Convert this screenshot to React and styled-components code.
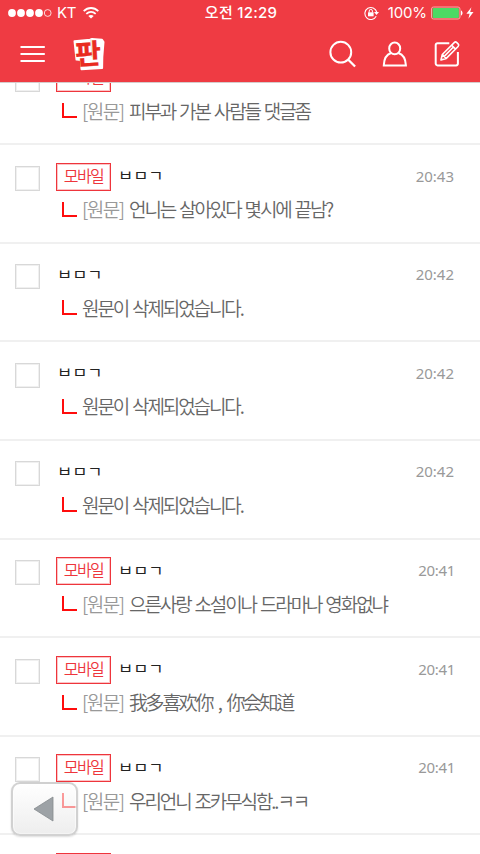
import React from "react";
import styled, { createGlobalStyle } from "styled-components";

const GlobalStyle = createGlobalStyle`
  * {
    box-sizing: border-box;
  }
  body {
    margin: 0;
    background: #fff;
    font-family: "Noto Sans CJK KR", "Noto Sans CJK SC", sans-serif;
  }
`;

const Screen = styled.div`
  position: relative;
  display: flex;
  flex-direction: column;
  width: 480px;
  height: 854px;
  overflow: hidden;
`;

const Header = styled.header`
  flex: none;
  height: 82px;
  background: #ef3b43;
  color: #fff;
`;

const StatusBar = styled.div`
  display: grid;
  grid-template-columns: 1fr auto 1fr;
  align-items: center;
  height: 26px;
  padding: 0 6px 0 8px;
`;

const StatusGroup = styled.div`
  display: flex;
  align-items: center;
  justify-content: ${(props) => props.$end ? "flex-end" : "flex-start"};
`;

const StatusText = styled.span`
  margin-left: ${(props) => props.$left || 0}px;
  font-family: Inter, "Noto Sans CJK KR", sans-serif;
  font-size: 15px;
  font-weight: ${(props) => props.$weight || 400};
  letter-spacing: ${(props) => props.$spacing || 0}px;
  line-height: 26px;
  white-space: nowrap;
`;

const NavBar = styled.nav`
  display: flex;
  align-items: center;
  height: 56px;
  padding: 0 19px 0 20px;
`;

const Logo = styled.svg`
  margin-left: 27px;
  margin-right: auto;
`;

const NavIcons = styled.div`
  display: flex;
  align-items: center;
  gap: 24px;
`;

const List = styled.main`
  flex: 1;
  min-height: 0;
  overflow: hidden;
  border-top: 1px solid #d5cccc;
`;

const Row = styled.article`
  display: flex;
  align-items: flex-start;
  height: 98.6px;
  padding: 17.5px 26px 0 15px;
  border-bottom: 2px solid #f0f0f0;
  &:first-child {
    margin-top: -36.4px;
  }
`;

const CheckBox = styled.span`
  flex: none;
  width: 25px;
  height: 25px;
  margin-top: 3px;
  margin-right: 16px;
  border: 1px solid #d8d8d8;
  box-shadow: inset 0 0 0 1px #f0f0f0;
`;

const Content = styled.div`
  flex: 1;
  min-width: 0;
`;

const TopLine = styled.div`
  display: flex;
  align-items: center;
  height: 28px;
`;

const Badge = styled.span`
  flex: none;
  width: 55px;
  height: 28px;
  margin-right: 6px;
  border: 1px solid #ee353c;
  box-shadow: inset 0 0 0 1px #fbc4c6;
  color: #ee353c;
  font-size: 16px;
  font-weight: 350;
  letter-spacing: -1.6px;
  line-height: 23px;
  text-align: center;
`;

const Name = styled.span`
  margin: 0 0 3px 1px;
  color: #222;
  font-size: 16.5px;
  font-weight: 400;
  line-height: 26px;
  transform: scaleY(0.88);
`;

const Time = styled.time`
  margin: 0 ${(props) => props.$nudge ? -1 : 0}px 2px auto;
  color: #999;
  font-family: "Noto Sans", sans-serif;
  font-size: 15px;
  font-weight: 400;
  letter-spacing: ${(props) => props.$nudge ? -0.3 : 0}px;
  line-height: 26px;
`;

const Reply = styled.div`
  display: flex;
  align-items: center;
  height: 28px;
  margin-top: 4.5px;
  padding-left: 5.5px;
  color: #666;
  font-size: 19px;
  font-weight: 350;
  line-height: 28px;
  white-space: pre;
`;

const ReplyText = styled.span`
  letter-spacing: ${(props) => props.$hanzi ? -2.4 : -2.1}px;
  word-spacing: ${(props) => props.$hanzi ? 4 : 1.8}px;
`;

const Elbow = styled.span`
  flex: none;
  width: 15px;
  height: 15px;
  margin-right: 5.5px;
  border-left: 2px solid #ff0d0d;
  border-bottom: 2px solid #ff0d0d;
`;

const Origin = styled.span`
  width: 47px;
  color: #999;
  letter-spacing: -1.5px;
`;

const BackButton = styled.button`
  position: absolute;
  left: 11px;
  top: 782px;
  display: flex;
  align-items: center;
  justify-content: center;
  width: 67px;
  height: 54px;
  padding: 0 3px 0 0;
  border: 2px solid rgba(205, 205, 205, 0.9);
  border-radius: 9px;
  background: linear-gradient(rgba(255, 255, 255, 0.6), rgba(226, 226, 226, 0.6));
  box-shadow: inset 0 0 0 1px #fff8, 0 1px 2px #0002;
`;

const comments = [
  { mobile: true, text: "피부과 가본 사람들 댓글좀", time: "20:43" },
  { mobile: true, text: "언니는 살아있다 몇시에 끝남?", time: "20:43" },
  { text: "원문이 삭제되었습니다.", time: "20:42" },
  { text: "원문이 삭제되었습니다.", time: "20:42" },
  { text: "원문이 삭제되었습니다.", time: "20:42" },
  { mobile: true, text: "으른사랑 소설이나 드라마나 영화없냐", time: "20:41" },
  { mobile: true, hanzi: true, text: "我多喜欢你 , 你会知道", time: "20:41" },
  { mobile: true, text: "우리언니 조카무식함..ㅋㅋ", time: "20:41" },
  { mobile: true, text: "", time: "20:41" },
];

const SignalIcon = () => (
  <svg width="45" height="10" viewBox="0 0 45 10" fill="#fff">
    <circle cx="4" cy="5" r="3.9" />
    <circle cx="13" cy="5" r="3.9" />
    <circle cx="22" cy="5" r="3.9" />
    <circle cx="31" cy="5" r="3.9" />
    <circle cx="39.7" cy="5" r="3.4" fill="none" stroke="#fff" strokeWidth="0.8" />
  </svg>
);

const WifiSvg = styled.svg`
  margin-left: 7px;
`;

const WifiIcon = () => (
  <WifiSvg width="16" height="12" viewBox="0 0 16 12" fill="none" stroke="#fff" strokeWidth="1.8">
    <path d="M.7 4.2C5-.1 11-.1 15.3 4.2M3.3 6.9c2.8-2.6 6.6-2.6 9.4 0" />
    <path d="M8 11.6 5.3 9c1.5-1.4 3.9-1.4 5.4 0Z" fill="#fff" stroke="none" />
  </WifiSvg>
);

const LockIcon = () => (
  <svg width="16" height="14" viewBox="0 0 16 14" fill="none" stroke="#fff">
    <path d="M12.2 10.3A6 6 0 1 1 12.7 6" strokeWidth="1.1" />
    <path d="M10 6h5l-2.5 3Z" fill="#fff" stroke="none" />
    <path d="M5.2 6.5V5a1.6 1.6 0 0 1 3.2 0v1.5" />
    <path d="M4 6.3h5.6v4H4z" fill="#fff" stroke="none" />
  </svg>
);

const BatterySvg = styled.svg`
  margin-left: 4px;
`;

const BatteryIcon = () => (
  <BatterySvg width="43" height="14" viewBox="0 0 43 14">
    <rect x=".5" y="1" width="28.5" height="12" rx="2" fill="none" stroke="#f9a9a9" />
    <rect x="1.6" y="2.1" width="26.3" height="9.8" rx="1" fill="#4cd964" />
    <path d="M30 4.5c2 .5 2 4.5 0 5Z" fill="#fff" />
    <path d="m40.4 1.2-5 6.5h3.2l-1.2 5.1 5.1-6.9h-3.3Z" fill="#fff" />
  </BatterySvg>
);

function App() {
  return (
    <Screen>
      <GlobalStyle />
      <Header>
        <StatusBar>
          <StatusGroup>
            <SignalIcon />
            <StatusText $left={4} $spacing={-0.3}>KT</StatusText>
            <WifiIcon />
          </StatusGroup>
          <StatusText $weight={500} $spacing={0.25}>오전 12:29</StatusText>
          <StatusGroup $end>
            <LockIcon />
            <StatusText $left={8} $spacing={-0.1}>100%</StatusText>
            <BatteryIcon />
          </StatusGroup>
        </StatusBar>
        <NavBar>
          <svg width="25" height="18" viewBox="0 0 25 18" stroke="#fff" strokeWidth="2">
            <path d="M.5 2h24.3M.5 9h24.3M.5 16h24.3" />
          </svg>
          <Logo width="34" height="34" viewBox="0 0 34 34">
            <path d="M2.5 4.2 18 2.8 20 2l10 .8 1.5 2.2-1.2 15-.2 11-20.6 1.2L8.8 23l-4.3-.4Z" fill="#fff" stroke="#fff" strokeWidth="2" strokeLinejoin="round" />
            <path d="M18.8 2.5 19.8 20" stroke="#e2d5d5" strokeWidth=".8" />
            <text x="3.2" y="27" fill="#e92b20" fontSize="28" fontWeight="700" stroke="#e92b20" strokeWidth=".4" transform="rotate(-3 17 17)">판</text>
          </Logo>
          <NavIcons>
            <svg width="28" height="28" viewBox="0 0 28 28" fill="none" stroke="#fff" strokeWidth="2">
              <circle cx="11.8" cy="12.2" r="10.4" />
              <path d="m19.3 19.7 6.8 6.8" strokeWidth="2.3" />
            </svg>
            <svg width="28" height="28" viewBox="0 0 28 28" fill="none" stroke="#fff" strokeWidth="2">
              <ellipse cx="13.7" cy="8.4" rx="5.5" ry="5.9" />
              <path d="M10.1 13C5.5 14.5 3 18 2.8 25.4h22.1c-.3-7.4-2.9-10.9-7.5-12.4" />
            </svg>
            <svg width="28" height="28" viewBox="0 0 28 28" fill="none" stroke="#fff" strokeWidth="2" strokeLinejoin="round">
              <path d="M16.3 3.2H4.5a1.8 1.8 0 0 0-1.8 1.8v18.6a1.8 1.8 0 0 0 1.8 1.8h18.6a1.8 1.8 0 0 0 1.8-1.8V12" />
              <path d="m8 20 1.3-5.5L21.2 2.6c.8-.8 1.8-.8 2.6 0l1.3 1.3c.8.8.8 1.8 0 2.6L13.3 18.4ZM9.4 14.6l3.8 3.8M18.7 5.2l3.9 3.9M11 16.6 20.4 7" strokeWidth="1.6" />
            </svg>
          </NavIcons>
        </NavBar>
      </Header>
      <List>
        {comments.map((comment, i) => (
          <Row key={i}>
            <CheckBox />
            <Content>
              <TopLine>
                {comment.mobile && <Badge>모바일</Badge>}
                <Name>ㅂㅁㄱ</Name>
                <Time $nudge={comment.time.endsWith("1")}>{comment.time}</Time>
              </TopLine>
              <Reply>
                <Elbow />
                {comment.mobile && <Origin>[원문]</Origin>}
                <ReplyText $hanzi={comment.hanzi}>{comment.text}</ReplyText>
              </Reply>
            </Content>
          </Row>
        ))}
      </List>
      <BackButton>
        <svg width="21" height="26" viewBox="0 0 21 26">
          <path d="M20 1v24L1 13Z" fill="#9da2a6" stroke="#858a8e" strokeWidth=".8" />
        </svg>
      </BackButton>
    </Screen>
  );
}

export default App;
